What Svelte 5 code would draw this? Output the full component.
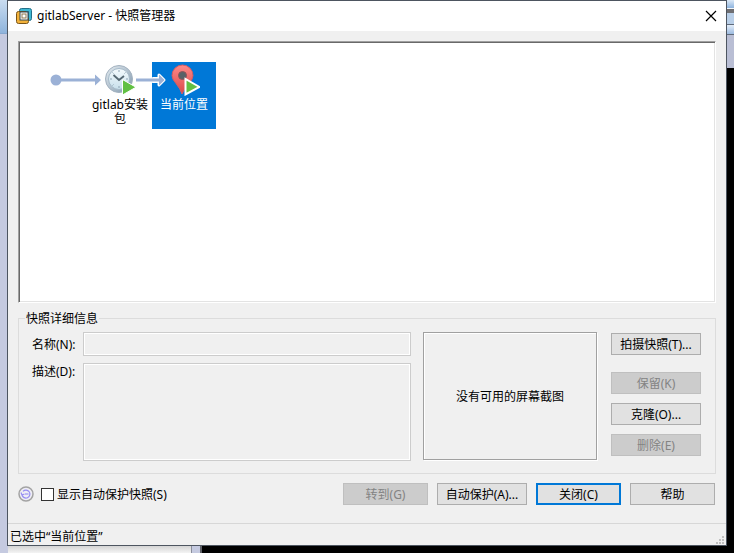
<script lang="ts">
  interface Snapshot {
    id: string;
    label: string;
    kind: "snapshot" | "current";
  }

  const snapshots: Snapshot[] = [
    { id: "base", label: "gitlab安装包", kind: "snapshot" },
    { id: "current", label: "当前位置", kind: "current" },
  ];

  let selected = $state("current");
  let showAutoProtect = $state(false);

  const current = $derived(snapshots.find((s) => s.id === selected));
</script>

<div class="desktop">
  <div class="back-left"><span class="back-tab"></span></div>
  <div class="back-right">
    <span class="stripe light"></span>
    <span class="stripe dark"></span>
    <span class="stripe box"></span>
    <span class="stripe blue"></span>
  </div>
  <div class="back-bottom"></div>

  <main class="window">
    <header class="titlebar">
      <svg class="app-icon" width="16" height="16" viewBox="0 0 16 16">
        <rect x="3.5" y="0.5" width="12" height="12" rx="2" fill="#3fb8d2" stroke="#23708a" />
        <path d="M2.5 3.5H10V6H12.500V13.500q0 2-2 2h-8q-2 0-2-2v-8q0-2 2-2z" fill="#f3b23a" stroke="#7a5518" />
        <path d="M10 3.5h2.500V10" fill="none" stroke="#23708a" />
        <rect x="4" y="4" width="8" height="8" fill="#fff" stroke="#34474f" />
        <rect x="6" y="6" width="4" height="4" fill="#fff" stroke="#8d7a50" />
      </svg>
      <h1>gitlabServer - 快照管理器</h1>
      <button class="close" aria-label="关闭">
        <svg width="12" height="12" viewBox="0 0 12 12">
          <path d="M1 1l10 10M11 1L1 11" stroke="#000" stroke-width="1.200" />
        </svg>
      </button>
    </header>

    <div class="body">
      <section class="tree">
        <svg class="origin" width="52" height="12" viewBox="0 0 52 12">
          <circle cx="6" cy="6" r="5.500" fill="#9bb1d6" />
          <path d="M10 4.500h35V0.500L51 6l-6 5.500v-4H10z" fill="#9bb1d6" />
        </svg>
        {#each snapshots as snap (snap.id)}
          <button
            class="node"
            class:selected={selected === snap.id}
            onclick={() => (selected = snap.id)}
          >
            {#if snap.kind === "snapshot"}
              <svg width="32" height="32" viewBox="0 0 32 32">
                <defs>
                  <linearGradient id="rim" x1="0" y1="0" x2="1" y2="1">
                    <stop offset="0" stop-color="#e6edf2" />
                    <stop offset="1" stop-color="#7f97ab" />
                  </linearGradient>
                  <linearGradient id="face" x1="0" y1="0" x2="0" y2="1">
                    <stop offset="0" stop-color="#f4fafd" />
                    <stop offset="1" stop-color="#c8e0ec" />
                  </linearGradient>
                </defs>
                <circle cx="15" cy="15" r="13.500" fill="url(#rim)" stroke="#a3b2c0" />
                <circle cx="15" cy="15" r="10.500" fill="url(#face)" stroke="#a6bac9" />
                <path
                  d="M15 6v2M15 22v2M6 15h2M22 15h2M8.500 8.500l1 1M21.500 8.500l-1 1M8.500 21.500l1-1"
                  stroke="#8fa5b5"
                />
                <path d="M9.500 11l5.500 5 5-4" fill="none" stroke="#566873" stroke-width="1.800" />
                <path d="M18.500 15.500V31L32 23.200z" fill="#62c043" stroke="#fff" />
              </svg>
            {:else}
              <svg width="32" height="32" viewBox="0 0 32 32">
                <defs>
                  <linearGradient id="pin" x1="0" y1="0" x2="0" y2="1">
                    <stop offset="0" stop-color="#ff8a88" />
                    <stop offset="1" stop-color="#d94749" />
                  </linearGradient>
                </defs>
                <path
                  d="M14 30Q12.500 25 8 19.500 4 15 4 11.500A10.500 10.500 0 0 1 25 11.500Q25 15 21 19.500 16 25 14 30z"
                  fill="url(#pin)"
                  stroke="#d65c62"
                />
                <circle cx="14.500" cy="11.500" r="4" fill="#596267" stroke="#8d5559" />
                <path d="M17.500 15v15.500L31.500 23z" fill="#62c043" stroke="#fff" stroke-width="2" />
              </svg>
              <svg class="link" width="32" height="16" viewBox="0 0 32 16">
                <path d="M18 6.500h6V3L29 8l-5 5V9.500h-6z" stroke="#fff" stroke-width="3" stroke-linejoin="round" />
                <path d="M1 6.500h23V2.500L29.500 8l-5.500 5.500v-4H1z" fill="#9bb1d6" />
              </svg>
            {/if}
            <span class="caption">{snap.label}</span>
          </button>
        {/each}
      </section>

      <fieldset class="details">
        <legend>快照详细信息</legend>
        <div class="fields">
          <label class="middle" for="snap-name">名称(N):</label>
          <input id="snap-name" type="text" disabled />
          <label for="snap-desc">描述(D):</label>
          <textarea id="snap-desc" disabled></textarea>
        </div>
        <div class="preview">没有可用的屏幕截图</div>
        <div class="actions">
          <button class="btn take">拍摄快照(T)...</button>
          <button class="btn" disabled>保留(K)</button>
          <button class="btn">克隆(O)...</button>
          <button class="btn" disabled>删除(E)</button>
        </div>
      </fieldset>

      <footer class="bottom">
        <svg width="16" height="16" viewBox="0 0 16 16">
          <circle cx="8" cy="8" r="7" fill="#eeedf5" stroke="#a3a3a3" stroke-width="1.500" />
          <path
            d="M4 9A4 4 0 1 0 5 5.300M3 6.500L4 9l2.500-1"
            fill="none"
            stroke="#958df2"
            stroke-width="1.200"
          />
          <path d="M7 8h3.500" stroke="#8b82f0" />
        </svg>
        <label class="check">
          <input type="checkbox" bind:checked={showAutoProtect} />
          <span>显示自动保护快照(S)</span>
        </label>
        <div class="buttons">
          <button class="btn" disabled>转到(G)</button>
          <button class="btn wide">自动保护(A)...</button>
          <button class="btn default">关闭(C)</button>
          <button class="btn">帮助</button>
        </div>
      </footer>
    </div>

    <div class="status">
      <span>已选中“{current?.label}”</span>
      <svg width="9" height="9" viewBox="0 0 9 9" fill="#bfbfbf">
        <path d="M6 0h2v2h-2zM3 3h2v2h-2zM6 3h2v2h-2zM0 6h2v2h-2zM3 6h2v2h-2zM6 6h2v2h-2z" />
      </svg>
    </div>
  </main>
</div>

<style>
  :global(body) {
    background: #000;
  }

  .desktop {
    position: relative;
    box-sizing: border-box;
    min-height: 100vh;
    padding: 0 7px 7px;
    display: flex;
    font-family: "Noto Sans", "Noto Sans CJK SC", sans-serif;
    font-size: 12px;
    line-height: 16px;
    color: #000;
  }

  /* windows behind the dialog */
  .back-left {
    position: absolute;
    inset: 0 auto 0 0;
    width: 200px;
    background: #c5cae0;
    border-right: 2px solid #5f6168;
  }

  .back-tab {
    display: block;
    width: 8px;
    height: 33px;
    background: linear-gradient(#c9dcf0, #8fb4dc);
    border-bottom: 1px solid #86a8d0;
  }

  .back-right {
    position: absolute;
    top: 0;
    right: 0;
    width: 8px;
    height: 68px;
    background: #b9bed4;
  }

  .stripe {
    display: block;
    height: 8px;
  }

  .stripe.light {
    background: linear-gradient(#dce9f7, #8db3de);
    border-bottom: 1px solid #f2f6fb;
  }

  .stripe.dark {
    height: 4px;
    background: #6e6e72;
  }

  .stripe.box {
    box-sizing: border-box;
    height: 12px;
    background: #b9cfe8;
    border: solid #5f6a7a;
    border-width: 4px 0 1px 1px;
    border-top-color: #b9cfe8;
  }

  .stripe.blue {
    height: 9px;
    background: linear-gradient(#e4eefa, #9dbbe0);
    border-bottom: 1px solid #5f6a7a;
  }

  .back-bottom {
    position: absolute;
    left: 8px;
    bottom: 0;
    width: 183px;
    height: 8px;
    background: linear-gradient(#d0d0d0, #f4f4f4);
    border-right: 1px solid #8b8f9c;
  }

  /* dialog */
  .window {
    position: relative;
    flex: 1;
    display: flex;
    flex-direction: column;
    background: #f0f0f0;
    border: 1px solid #4d5560;
  }

  .titlebar {
    display: flex;
    align-items: center;
    height: 30px;
    padding: 0 9px 0 8px;
    background: #fff;
  }

  .titlebar h1 {
    flex: 1;
    margin: 0 0 0 5px;
    font-size: 12px;
    font-weight: 400;
  }

  .close {
    display: flex;
    padding: 0;
    border: 0;
    background: none;
  }

  .body {
    flex: 1;
    display: flex;
    flex-direction: column;
    padding: 10px 10px 0;
  }

  .tree {
    flex: 1;
    display: flex;
    align-items: flex-start;
    padding: 20px 0 0 31px;
    background: #fff;
    border: 1px solid;
    border-color: #a0a0a0 #fff #fff #a0a0a0;
    box-shadow: inset 1px 1px #696969, inset -1px -1px #e3e3e3;
  }

  .origin {
    margin: 12px -14px 0 0;
  }

  .node {
    position: relative;
    display: flex;
    flex-direction: column;
    align-items: center;
    gap: 2px;
    box-sizing: border-box;
    width: 64px;
    height: 67px;
    padding: 2px 2px 0;
    border: 0;
    background: none;
    color: inherit;
    font: inherit;
    line-height: 14px;
  }

  .node.selected {
    background: #0078d7;
    color: #fff;
  }

  .link {
    position: absolute;
    top: 10px;
    left: -17px;
  }

  .caption {
    word-break: break-all;
  }

  .details {
    display: flex;
    margin: 6px 0 0;
    padding: 5px 14px 12px 13px;
    border: 1px solid #dcdcdc;
  }

  .details legend {
    margin-left: -7px;
    padding: 2px 1px 0;
  }

  .fields {
    flex: 1;
    display: grid;
    grid-template-columns: auto 1fr;
    grid-template-rows: 24px 98px;
    gap: 7px;
  }

  .fields label {
    padding-top: 1px;
  }

  .fields label.middle {
    align-self: center;
  }

  .fields input,
  .fields textarea {
    box-sizing: border-box;
    width: 100%;
    height: 100%;
    margin: 0;
    border: 1px solid #cccccc;
    box-shadow: inset 1px 1px #fff, inset -1px -1px #fff;
    background: #f0f0f0;
    font: inherit;
    resize: none;
  }

  .preview {
    box-sizing: border-box;
    display: flex;
    align-items: center;
    justify-content: center;
    width: 174px;
    margin: 0 14px 1px 12px;
    padding-top: 2px;
    border: 1px solid #a0a0a0;
    box-shadow: inset 1px 1px #fff, 1px 1px #fff;
  }

  .actions {
    display: flex;
    flex-direction: column;
    gap: 9px;
    width: 90px;
    padding-top: 1px;
  }

  .btn {
    box-sizing: border-box;
    width: 85px;
    height: 22px;
    padding: 2px 0 0;
    border: 1px solid #adadad;
    background: #e1e1e1;
    color: #000;
    font: inherit;
    white-space: nowrap;
  }

  .actions .btn,
  .btn.wide {
    width: 90px;
  }

  .btn.take {
    margin-bottom: 8px;
  }

  .btn:disabled {
    background: #cccccc;
    border-color: #bfbfbf;
    color: #838383;
  }

  .btn.default {
    border: 2px solid #0078d7;
  }

  .bottom {
    display: flex;
    align-items: center;
    padding: 9px 1px 18px 0;
  }

  .check {
    display: flex;
    align-items: center;
    gap: 3px;
    margin-left: 7px;
  }

  .check span {
    padding-top: 2px;
  }

  .check input {
    appearance: none;
    box-sizing: border-box;
    width: 13px;
    height: 13px;
    margin: 0;
    border: 1px solid #333;
    background: #fff;
  }

  .check input:checked {
    background: #333;
  }

  .buttons {
    display: flex;
    gap: 9px;
    margin-left: auto;
  }

  .status {
    display: flex;
    align-items: flex-end;
    justify-content: space-between;
    padding: 5px 1px 0 2px;
    border-top: 1px solid #d7d7d7;
  }
</style>
